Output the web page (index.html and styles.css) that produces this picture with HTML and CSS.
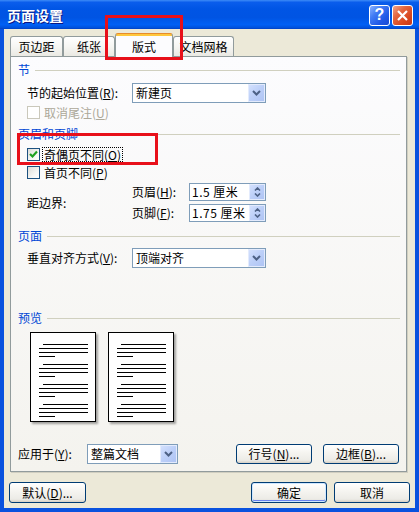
FILE: index.html
```html
<!DOCTYPE html>
<html lang="zh-CN">
<head>
<meta charset="utf-8">
<title>页面设置</title>
<link rel="stylesheet" href="styles.css">
</head>
<body>
<div class="window">
  <div class="titlebar">
    <span class="title">页面设置</span>
    <div class="caption-btns">
      <span class="cap-btn help">?</span>
      <span class="cap-btn close"><svg width="19" height="19" viewBox="0 0 19 19"><path d="M5 5 L14 14 M14 5 L5 14" stroke="#fff" stroke-width="2.2" fill="none"/></svg></span>
    </div>
  </div>
  <div class="client">
    <div class="tabs">
      <div class="tab t1">页边距</div>
      <div class="tab t2">纸张</div>
      <div class="tab sel t3">版式</div>
      <div class="tab t4">文档网格</div>
    </div>
    <div class="panel">
      <div class="ghead g1"><span>节</span><i></i></div>
      <div class="row r-start">
        <span class="lbl w105">节的起始位置(<u>R</u>):</span>
        <div class="combo w134"><span class="val">新建页</span><b class="drop"><svg width="9" height="6" viewBox="0 0 9 6"><path d="M1 1 L4.5 4.5 L8 1" fill="none" stroke="#4D6185" stroke-width="2"/></svg></b></div>
      </div>
      <div class="check disabled r-endnote"><span class="box"></span><span>取消尾注(<u>U</u>)</span></div>
      <div class="ghead g2"><span>页眉和页脚</span><i></i></div>
      <div class="check r-odd"><span class="box checked"><svg width="11" height="11" viewBox="0 0 11 11"><path d="M2 5 L4.5 7.5 L9 2.5" fill="none" stroke="#21A121" stroke-width="2.2"/></svg></span><span class="focus">奇偶页不同(<u>O</u>)</span></div>
      <div class="check r-first"><span class="box"></span><span>首页不同(<u>P</u>)</span></div>
      <div class="margins">
        <span class="lbl w105">距边界:</span>
        <div class="spins">
          <div class="spinrow"><span class="lbl w57">页眉(<u>H</u>):</span><div class="spin"><span class="val">1.5 厘米</span><b class="spinbtn"><svg width="7" height="4" viewBox="0 0 7 4"><path d="M1 3.5 L3.5 1 L6 3.5" fill="none" stroke="#4D6185" stroke-width="1.6"/></svg><svg width="7" height="4" viewBox="0 0 7 4"><path d="M1 0.5 L3.5 3 L6 0.5" fill="none" stroke="#4D6185" stroke-width="1.6"/></svg></b></div></div>
          <div class="spinrow"><span class="lbl w57">页脚(<u>F</u>):</span><div class="spin"><span class="val">1.75 厘米</span><b class="spinbtn"><svg width="7" height="4" viewBox="0 0 7 4"><path d="M1 3.5 L3.5 1 L6 3.5" fill="none" stroke="#4D6185" stroke-width="1.6"/></svg><svg width="7" height="4" viewBox="0 0 7 4"><path d="M1 0.5 L3.5 3 L6 0.5" fill="none" stroke="#4D6185" stroke-width="1.6"/></svg></b></div></div>
        </div>
      </div>
      <div class="ghead g3"><span>页面</span><i></i></div>
      <div class="row r-valign">
        <span class="lbl w105">垂直对齐方式(<u>V</u>):</span>
        <div class="combo w134"><span class="val">顶端对齐</span><b class="drop"><svg width="9" height="6" viewBox="0 0 9 6"><path d="M1 1 L4.5 4.5 L8 1" fill="none" stroke="#4D6185" stroke-width="2"/></svg></b></div>
      </div>
      <div class="ghead g4"><span>预览</span><i></i></div>
      <div class="preview">
        <div class="page">
          <div class="para"><i class="first"></i><i></i><i></i><i class="last"></i></div>
          <div class="para"><i class="first"></i><i></i><i></i><i class="last"></i></div>
          <div class="para"><i class="first"></i><i></i><i></i><i class="last"></i></div>
          <div class="para"><i class="first"></i><i></i><i></i><i class="last"></i></div>
        </div>
        <div class="page">
          <div class="para"><i class="first"></i><i></i><i></i><i class="last"></i></div>
          <div class="para"><i class="first"></i><i></i><i></i><i class="last"></i></div>
          <div class="para"><i class="first"></i><i></i><i></i><i class="last"></i></div>
          <div class="para"><i class="first"></i><i></i><i></i><i class="last"></i></div>
        </div>
      </div>
      <div class="apply">
        <span class="lbl apply-lbl">应用于(<u>Y</u>):</span>
        <div class="combo w91"><span class="val">整篇文档</span><b class="drop"><svg width="9" height="6" viewBox="0 0 9 6"><path d="M1 1 L4.5 4.5 L8 1" fill="none" stroke="#4D6185" stroke-width="2"/></svg></b></div>
        <div class="apply-btns">
          <span class="btn">行号(<u>N</u>)...</span>
          <span class="btn">边框(<u>B</u>)...</span>
        </div>
      </div>
    </div>
    <div class="footer">
      <span class="btn fbtn-wide">默认(<u>D</u>)...</span>
      <div class="footer-right">
        <span class="btn default">确定</span>
        <span class="btn">取消</span>
      </div>
    </div>
  </div>
  <div class="mark mark-tab"></div>
  <div class="mark mark-odd"></div>
</div>
</body>
</html>
```

FILE: styles.css
```css
html, body {
  margin: 0;
  padding: 0;
  background: #ffffff;
}

.window {
  position: relative;
  width: 419px;
  height: 512px;
  background: #0A52DE;
  display: flex;
  flex-direction: column;
  font-family: "Noto Sans CJK SC", "Noto Sans", sans-serif;
  font-size: 12px;
  line-height: 14px;
  color: #000;
  overflow: hidden;
}

u { text-decoration: underline; }

/* title bar */
.titlebar {
  flex: none;
  height: 29px;
  box-sizing: border-box;
  display: flex;
  align-items: center;
  justify-content: space-between;
  padding: 0 6px 0 7px;
  background: linear-gradient(#3D8BF7 0%, #0A5DEC 8%, #0055E5 30%, #0054E3 60%, #0060F5 85%, #0052DD 95%, #0040C4 100%);
}

.title {
  color: #fff;
  font-weight: bold;
  font-size: 14px;
  line-height: 16px;
  text-shadow: 1px 1px 0 #0A1883;
  letter-spacing: 0;
}

.caption-btns {
  display: flex;
  gap: 2px;
  margin-top: 1px;
}

.cap-btn {
  width: 21px;
  height: 21px;
  box-sizing: border-box;
  border: 1px solid #ffffff;
  border-radius: 3px;
  display: flex;
  align-items: center;
  justify-content: center;
}

.help {
  background: linear-gradient(135deg, #8AB2FF 0%, #3F7BF4 35%, #2159E6 70%, #1A4CD3 100%);
  color: #fff;
  font-family: "Liberation Sans", sans-serif;
  font-weight: bold;
  font-size: 16px;
}

.close {
  background: linear-gradient(135deg, #F3A58A 0%, #E4663F 35%, #D9471F 70%, #C5371A 100%);
}

/* client */
.client {
  flex: 1;
  margin: 0 4px 4px;
  background: #ECE9D8;
  padding-top: 4px;
  box-sizing: border-box;
  display: flex;
  flex-direction: column;
}

.tabs {
  display: flex;
  align-items: flex-end;
  height: 24px;
  margin-left: 6px;
  position: relative;
  z-index: 1;
}

.tab {
  height: 20px;
  margin-bottom: 1px;
  box-sizing: border-box;
  border: 1px solid #919B9C;
  border-bottom: none;
  border-radius: 3px 3px 0 0;
  background: linear-gradient(#FFFFFF, #F6F6F3 50%, #EAE9E3);
  display: flex;
  align-items: center;
  justify-content: center;
  padding-top: 1px;
}

.t1 { width: 53px; }
.t2 { width: 52px; }
.t3 { width: 58px; }
.t4 { width: 61px; }

.tab.sel {
  height: 24px;
  margin-bottom: 0;
  border-top-color: #E68B2C;
  background: linear-gradient(#FFC73C 0, #FFC73C 2px, #FCFCFE 2px, #FCFCFE 100%);
  padding-top: 3px;
}

.panel {
  margin: -1px 0 0 6px;
  width: 397px;
  height: 416px;
  box-sizing: border-box;
  border: 1px solid #919B9C;
  background: linear-gradient(#FCFCFE, #F4F3EE);
  box-shadow: 1px 1px 0 #D0CEC0;
  padding: 0 6px 0 7px;
  display: flex;
  flex-direction: column;
}

.ghead {
  display: flex;
  align-items: center;
  height: 14px;
  color: #0046D5;
}

.ghead i {
  flex: 1;
  height: 1px;
  background: #D0D0BF;
  margin-left: 5px;
}

.g1 { margin-top: 6px; }
.g2 { margin-top: 8px; }
.g3 { margin-top: 7px; }
.g4 { margin-top: 43px; }

.row {
  display: flex;
  align-items: center;
  height: 20px;
  padding-left: 9px;
}

.r-start { margin-top: 6px; }
.r-valign { margin-top: 5px; }

.lbl { flex: none; white-space: nowrap; }
.w105 { width: 105px; }
.w57 { width: 57px; }

.combo {
  flex: none;
  height: 20px;
  box-sizing: border-box;
  border: 1px solid #7F9DB9;
  background: #fff;
  display: flex;
  align-items: center;
}

.w134 { width: 134px; }
.w91 { width: 91px; }

.combo .val {
  flex: 1;
  padding-left: 3px;
  white-space: nowrap;
}

.drop {
  flex: none;
  width: 17px;
  align-self: stretch;
  box-sizing: border-box;
  border: 1px solid #E3EBFD;
  background: linear-gradient(135deg, #D3E0FD 0%, #BCCFF8 50%, #AFC4F4 100%);
  display: flex;
  align-items: center;
  justify-content: center;
}

/* checkboxes */
.check {
  display: flex;
  align-items: center;
  height: 13px;
  padding-left: 9px;
  gap: 4px;
}

.r-endnote { margin-top: 3px; }
.r-odd { margin-top: 7px; gap: 3px; }
.r-first { margin-top: 5px; }

.box {
  flex: none;
  width: 13px;
  height: 13px;
  box-sizing: border-box;
  border: 1px solid #1C5180;
  background: linear-gradient(135deg, #DCDCD7 0%, #F6F6F4 60%, #FFFFFF 100%);
  display: flex;
  align-items: center;
  justify-content: center;
}

.check.disabled .box {
  border-color: #CAC8BB;
  background: #FFFFFF;
}

.check.disabled {
  color: #ACA899;
}

.focus {
  outline: 1px dotted #000;
  padding: 0 1px;
  line-height: 13px;
}

/* margins */
.margins {
  margin-top: 4px;
  display: flex;
  align-items: center;
  padding-left: 9px;
}

.spins {
  display: flex;
  flex-direction: column;
  gap: 3px;
}

.spinrow {
  display: flex;
  align-items: center;
  height: 18px;
}

.spin {
  width: 77px;
  height: 18px;
  box-sizing: border-box;
  border: 1px solid #7F9DB9;
  background: #fff;
  display: flex;
  align-items: center;
}

.spin .val {
  flex: 1;
  padding-left: 2px;
  white-space: nowrap;
  letter-spacing: 0.5px;
}

.spinbtn {
  flex: none;
  width: 16px;
  align-self: stretch;
  box-sizing: border-box;
  border: 1px solid #E3EBFD;
  background: linear-gradient(135deg, #D3E0FD 0%, #BCCFF8 50%, #AFC4F4 100%);
  display: flex;
  flex-direction: column;
  align-items: center;
  justify-content: center;
  gap: 2px;
}

/* preview */
.preview {
  margin-top: 7px;
  padding-left: 12px;
  display: flex;
  gap: 12px;
}

.page {
  width: 66px;
  height: 90px;
  box-sizing: border-box;
  border: 1px solid #000;
  background: #fff;
  box-shadow: 2px 2px 2px rgba(0, 0, 0, 0.35);
  padding: 11px 7px 0 8px;
  overflow: hidden;
}

.para {
  display: flex;
  flex-direction: column;
  gap: 3px;
  margin-bottom: 7px;
}

.para i {
  display: block;
  height: 1px;
  background: #000;
}

.para i.first { margin-left: 4px; }
.para i.last { width: 16px; }

/* apply row */
.apply {
  margin-top: 22px;
  display: flex;
  align-items: center;
  height: 20px;
}

.apply-lbl { width: 69px; }

.apply-btns {
  margin-left: auto;
  margin-right: 1px;
  display: flex;
  gap: 11px;
}

.btn {
  width: 76px;
  height: 20px;
  box-sizing: border-box;
  border: 1px solid #003C74;
  border-radius: 3px;
  background: linear-gradient(#FFFFFF 0%, #F6F5F1 40%, #ECEBE6 85%, #D6D0C5 100%);
  display: flex;
  align-items: center;
  justify-content: center;
  white-space: nowrap;
}

/* footer */
.footer {
  margin-top: 10px;
  padding: 0 5px;
  display: flex;
  align-items: center;
  justify-content: space-between;
}

.footer .btn { height: 21px; }
.fbtn-wide { width: 77px; }

.footer-right {
  display: flex;
  gap: 7px;
}

.btn.default {
  box-shadow: inset 0 0 0 1px #CEE7FF, inset 0 -1px 0 1px #6982EE;
}

/* red highlight annotations */
.mark {
  position: absolute;
  box-sizing: border-box;
  border: 3px solid #E8101A;
  pointer-events: none;
  z-index: 5;
}

.mark-tab {
  left: 105px;
  top: 15px;
  width: 78px;
  height: 45px;
}

.mark-odd {
  left: 17px;
  top: 133px;
  width: 141px;
  height: 32px;
}
```
